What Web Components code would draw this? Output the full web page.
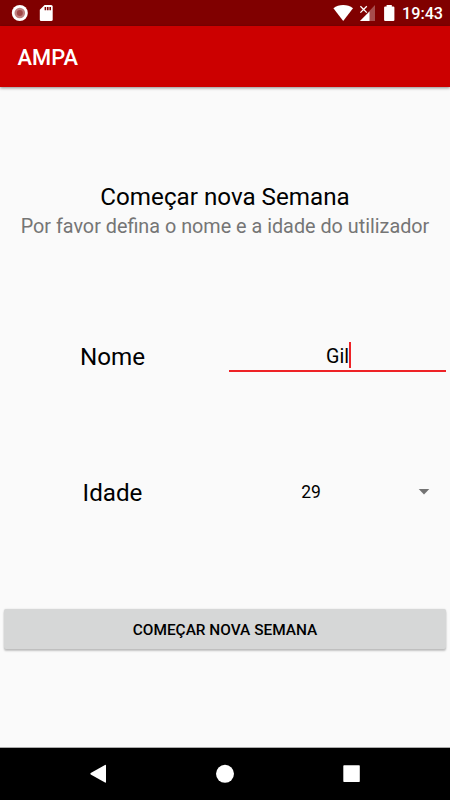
<!DOCTYPE html>
<html lang="pt">
<head>
<meta charset="utf-8">
<meta name="viewport" content="width=device-width, initial-scale=1">
<title>AMPA</title>
<style>
  html, body {
    margin: 0;
    height: 100%;
  }

  body {
    font-family: Roboto, "Liberation Sans", sans-serif;
    color: #000;
    background: #fafafa;
    overflow: hidden;
  }
</style>
</head>
<body>
<ampa-screen>
  <status-bar slot="top" time="19:43"></status-bar>
  <app-bar slot="top">AMPA</app-bar>
  <page-heading>
    Começar nova Semana
    <span slot="subtitle">Por favor defina o nome e a idade do utilizador</span>
  </page-heading>
  <form-row label="Nome"><text-field>Gil</text-field></form-row>
  <form-row label="Idade" class="age"><spinner-field>29</spinner-field></form-row>
  <raised-button>Começar nova Semana</raised-button>
  <nav-bar slot="bottom"></nav-bar>
</ampa-screen>

<script>
class AmpaScreen extends HTMLElement {
  constructor() {
    super();
    this.attachShadow({ mode: 'open' });
  }

  connectedCallback() {
    this.shadowRoot.innerHTML = `
      <style>
        :host {
          display: flex;
          flex-direction: column;
          height: 100vh;
        }

        main {
          flex: 1;
          display: flex;
          flex-direction: column;
          min-height: 0;
        }

        ::slotted(page-heading) {
          margin-top: 96px;
        }

        ::slotted(form-row) {
          margin-top: 91px;
        }

        ::slotted(form-row.age) {
          margin-top: 88px;
        }

        ::slotted(raised-button) {
          margin: 92px 4px 0;
        }
      </style>
      <slot name="top"></slot>
      <main><slot></slot></main>
      <slot name="bottom"></slot>
    `;
  }
}

class StatusBar extends HTMLElement {
  constructor() {
    super();
    this.attachShadow({ mode: 'open' });
  }

  connectedCallback() {
    const time = this.getAttribute('time') || '';

    this.shadowRoot.innerHTML = `
      <style>
        :host {
          display: flex;
          justify-content: space-between;
          height: 26px;
          background: #800000;
          color: #fff;
        }

        svg {
          display: block;
          flex: none;
        }

        .right {
          display: flex;
        }

        .time {
          width: 48px;
          font-size: 16.2px;
          font-weight: 500;
          line-height: 28px;
          white-space: nowrap;
        }
      </style>
      <svg width="60" height="26" viewBox="0 0 60 26">
        <circle cx="19.8" cy="13" r="8" fill="#fff"/>
        <circle cx="19.8" cy="13" r="5.3" fill="#bf8080"/>
        <circle cx="19.8" cy="13" r="3" fill="#a04848"/>
        <path fill="#fff" d="M44.6 5H51.2Q52.7 5 52.7 6.5V19.5Q52.7 21 51.2 21H41.2Q39.8 21 39.8 19.5V9.8Z"/>
        <path fill="#800000" d="M44.6 7H46.2V10.2H44.6ZM47 7H48.6V10.2H47ZM49.4 7H51V10.2H49.4Z"/>
      </svg>
      <div class="right">
        <svg width="72" height="26" viewBox="330 0 72 26">
          <path fill="#fff" d="M343.2 21L333.4 8.3Q337.6 5 343.2 5T353 8.3Z"/>
          <path fill="#fff" fill-opacity=".3" d="M375 5V21H360Z"/>
          <path fill="#800000" d="M359 4H368V13.5H359Z"/>
          <path fill="#fff" d="M369.5 11.5V21H360Z"/>
          <path stroke="#fff" stroke-width="1.3" d="M360.4 6.2L366.8 12.6M366.8 6.2L360.4 12.6"/>
          <path fill="#fff" d="M386.6 5H391.8V6.4H393.3Q394.4 6.4 394.4 7.5V20Q394.4 21 393.3 21H385.2Q384.1 21 384.1 20V7.5Q384.1 6.4 385.2 6.4H386.6Z"/>
        </svg>
        <span class="time">${time}</span>
      </div>
    `;
  }
}

class AppBar extends HTMLElement {
  constructor() {
    super();
    this.attachShadow({ mode: 'open' });
  }

  connectedCallback() {
    this.shadowRoot.innerHTML = `
      <style>
        :host {
          display: flex;
          align-items: center;
          box-sizing: border-box;
          height: 61px;
          padding: 2px 17.5px 0;
          background: #cc0000;
          box-shadow: 0 1px 3px rgba(0, 0, 0, .45);
          color: #fff;
          font-size: 21.9px;
          font-weight: 500;
        }
      </style>
      <slot></slot>
    `;
  }
}

class PageHeading extends HTMLElement {
  constructor() {
    super();
    this.attachShadow({ mode: 'open' });
  }

  connectedCallback() {
    this.shadowRoot.innerHTML = `
      <style>
        :host {
          display: block;
          text-align: center;
          white-space: nowrap;
        }

        .title {
          font-size: 24.2px;
          line-height: 29px;
        }

        .subtitle {
          color: #757575;
          font-size: 19.8px;
          line-height: 30px;
        }
      </style>
      <div class="title"><slot></slot></div>
      <div class="subtitle"><slot name="subtitle"></slot></div>
    `;
  }
}

class FormRow extends HTMLElement {
  constructor() {
    super();
    this.attachShadow({ mode: 'open' });
  }

  connectedCallback() {
    const label = this.getAttribute('label') || '';

    this.shadowRoot.innerHTML = `
      <style>
        :host {
          display: grid;
          grid-template-columns: 1fr 1fr;
          align-items: center;
          height: 48px;
        }

        .label {
          font-size: 24.2px;
          line-height: 28px;
          text-align: center;
        }
      </style>
      <span class="label">${label}</span>
      <slot></slot>
    `;
  }
}

class TextField extends HTMLElement {
  constructor() {
    super();
    this.attachShadow({ mode: 'open' });
  }

  connectedCallback() {
    this.shadowRoot.innerHTML = `
      <style>
        :host {
          display: flex;
          justify-content: center;
          align-items: center;
          box-sizing: border-box;
          height: 30px;
          margin: 0 4px;
          padding-top: 2px;
          border-bottom: 2px solid #ee2226;
          font-size: 19.7px;
          line-height: 26px;
        }

        .caret {
          width: 2px;
          height: 26px;
          margin: 0 -2px 4px 0;
          background: #ee2226;
        }
      </style>
      <slot></slot><span class="caret"></span>
    `;
  }
}

class SpinnerField extends HTMLElement {
  constructor() {
    super();
    this.attachShadow({ mode: 'open' });
  }

  connectedCallback() {
    this.shadowRoot.innerHTML = `
      <style>
        :host {
          display: flex;
          align-items: center;
          height: 26px;
          padding: 0 20px 2px 0;
          font-size: 17.5px;
        }

        .value {
          flex: 1;
          padding-right: 21px;
          text-align: center;
        }

        svg {
          flex: none;
        }
      </style>
      <span class="value"><slot></slot></span>
      <svg width="12" height="6" viewBox="0 0 12 6"><path fill="#737373" d="M.7 0H11.3L6 5.5Z"/></svg>
    `;
  }
}

class RaisedButton extends HTMLElement {
  constructor() {
    super();
    this.attachShadow({ mode: 'open' });
  }

  connectedCallback() {
    this.shadowRoot.innerHTML = `
      <style>
        :host {
          display: block;
        }

        button {
          display: block;
          width: 100%;
          height: 40px;
          padding: 1px 0 0;
          border: 0;
          border-radius: 2px;
          background: #d6d7d7;
          box-shadow: 0 2px 2px rgba(0, 0, 0, .22), 0 0 2px rgba(0, 0, 0, .12);
          color: #000;
          font: 500 15.4px Roboto, "Liberation Sans", sans-serif;
          text-transform: uppercase;
        }
      </style>
      <button type="button"><slot></slot></button>
    `;
  }
}

class NavBar extends HTMLElement {
  constructor() {
    super();
    this.attachShadow({ mode: 'open' });
  }

  connectedCallback() {
    this.shadowRoot.innerHTML = `
      <style>
        :host {
          display: block;
          height: 52px;
          border-top: 1px solid #aaa;
          background: #000;
        }

        svg {
          display: block;
        }
      </style>
      <svg width="450" height="52" viewBox="0 748 450 52" fill="#fff">
        <path d="M90.7 773Q90 773.7 90.7 774.4L105 782.6Q106 783 106 782V765.6Q106 764.5 105 765Z"/>
        <circle cx="225" cy="773.8" r="9"/>
        <rect x="343.3" y="765.3" width="16.5" height="16.7" rx=".7"/>
      </svg>
    `;
  }
}

customElements.define('ampa-screen', AmpaScreen);
customElements.define('status-bar', StatusBar);
customElements.define('app-bar', AppBar);
customElements.define('page-heading', PageHeading);
customElements.define('form-row', FormRow);
customElements.define('text-field', TextField);
customElements.define('spinner-field', SpinnerField);
customElements.define('raised-button', RaisedButton);
customElements.define('nav-bar', NavBar);
</script>
</body>
</html>
